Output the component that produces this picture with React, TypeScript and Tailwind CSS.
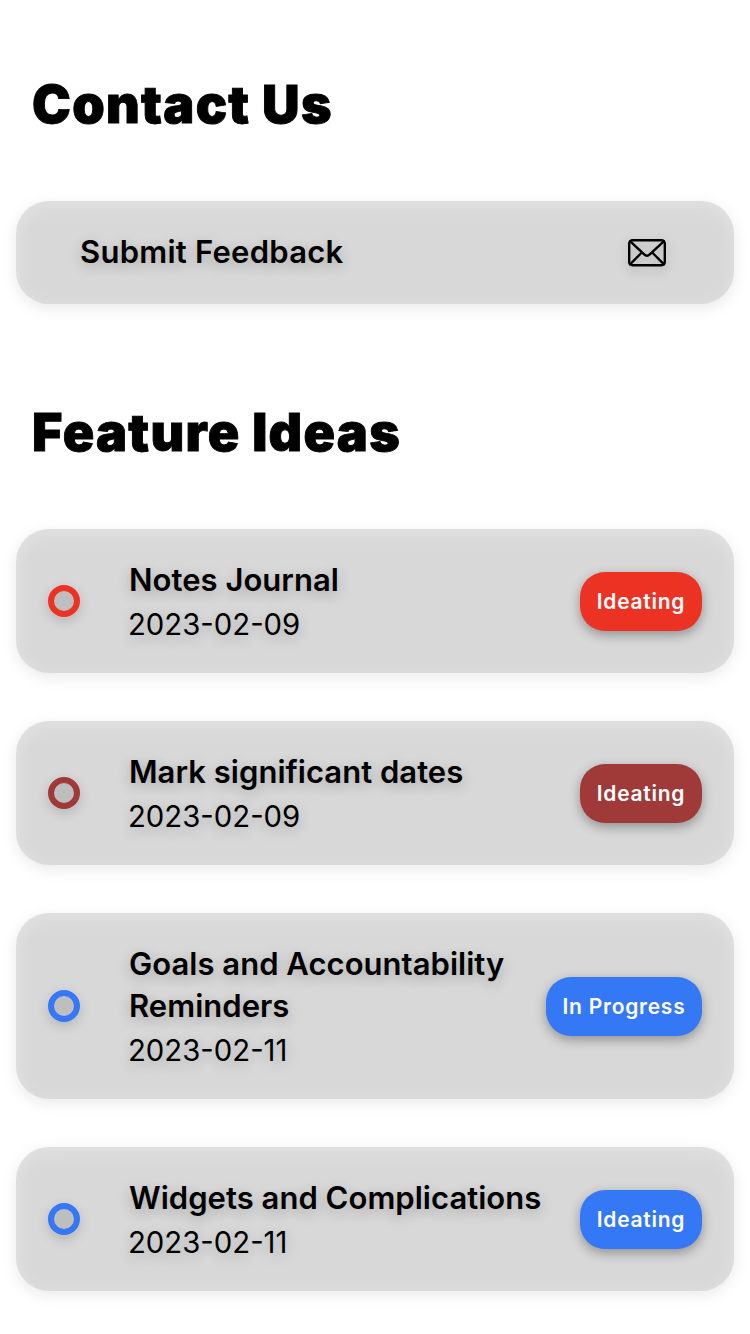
const shadow = "[text-shadow:0_4px_14px_rgba(0,0,0,0.24)]";

const ideas = [
  { lines: ["Notes Journal"], date: "2023-02-09", status: "Ideating", ring: "border-[#ec3323]", badge: "bg-[#ec3323]", height: "h-36", width: "w-[122px]" },
  { lines: ["Mark significant dates"], date: "2023-02-09", status: "Ideating", ring: "border-[#a03a38]", badge: "bg-[#a03a38]", height: "h-36", width: "w-[122px]" },
  { lines: ["Goals and Accountability", "Reminders"], date: "2023-02-11", status: "In Progress", ring: "border-[#3478f6]", badge: "bg-[#3478f6]", height: "h-[186px]", width: "w-[156px]" },
  { lines: ["Widgets and Complications"], date: "2023-02-11", status: "Ideating", ring: "border-[#3478f6]", badge: "bg-[#3478f6]", height: "h-36", width: "w-[122px]" },
];

const card =
  "flex items-center rounded-[33px] bg-[#d8d8d8] shadow-[0_4px_16px_rgba(0,0,0,0.09),inset_0_4px_18px_rgba(255,255,255,0.3)]";

const heading =
  "h-[129px] pl-4 text-[52px] leading-[65px] font-black tracking-[1.3px] [-webkit-text-stroke:0.9px_black]";

export default function App() {
  return (
    <main className="h-[1334px] w-[750px] overflow-hidden bg-white px-4 pt-[72px] font-['Inter',sans-serif] text-black">
      <h1 className={heading}>Contact Us</h1>
      <section className={`${card} h-[103px] justify-between pr-[68px] pl-16`}>
        <span className={`text-[31px] font-semibold tracking-[0.25px] ${shadow}`}>Submit Feedback</span>
        <svg className="drop-shadow-[0_4px_6px_rgba(0,0,0,0.2)]" width="40" height="28" viewBox="0 0 40 28" fill="none" stroke="black" strokeWidth="2.4" strokeLinecap="round">
          <rect x="3.2" y="1.3" width="35.6" height="24.9" rx="3.2" />
          <path d="M4 2.2 18.2 15.3Q21 18.2 23.8 15.3L38 2.2M4 25.3 15.3 14M38 25.3 26.7 14" />
        </svg>
      </section>
      <h1 className={`mt-24 ${heading}`}>Feature Ideas</h1>
      <div className="flex flex-col gap-12">
        {ideas.map((idea) => (
          <article key={idea.lines[0]} className={`${card} ${idea.height} px-8`}>
            <span className={`mr-[49px] size-8 shrink-0 rounded-full border-[6px] bg-[#bebebe] drop-shadow-[0_4px_6px_rgba(0,0,0,0.16)] ${idea.ring}`} />
            <div className={`min-w-0 flex-1 whitespace-nowrap ${shadow}`}>
              <h2 className="pt-px text-[31px] leading-[42px] font-semibold tracking-[0.03px]">
                {idea.lines.map((line) => (
                  <span key={line} className="block">{line}</span>
                ))}
              </h2>
              <p className="mt-1 -mb-px -ml-px text-[29.3px] leading-10">{idea.date}</p>
            </div>
            <span className={`flex h-[59px] shrink-0 items-center justify-center rounded-[25px] pt-px text-[21px] font-semibold tracking-[0.75px] text-white shadow-[0_4px_12px_rgba(0,0,0,0.33)] ${idea.badge} ${idea.width}`}>
              {idea.status}
            </span>
          </article>
        ))}
      </div>
    </main>
  );
}
